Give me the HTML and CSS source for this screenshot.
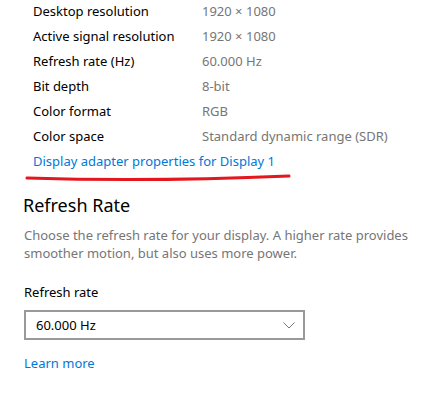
FILE: index.html
```html
<!DOCTYPE html>
<html>
<head>
<meta charset="utf-8">
<link rel="stylesheet" href="styles.css">
</head>
<body>
<div class="page">
  <div class="props">
    <div class="row"><span class="label">Desktop resolution</span><span class="value">1920 × 1080</span></div>
    <div class="row"><span class="label">Active signal resolution</span><span class="value">1920 × 1080</span></div>
    <div class="row"><span class="label">Refresh rate (Hz)</span><span class="value">60.000 Hz</span></div>
    <div class="row"><span class="label">Bit depth</span><span class="value">8-bit</span></div>
    <div class="row"><span class="label">Color format</span><span class="value">RGB</span></div>
    <div class="row"><span class="label">Color space</span><span class="value">Standard dynamic range (SDR)</span></div>
    <div class="row"><a class="link" href="#">Display adapter properties for Display 1</a></div>
  </div>
  <svg class="scribble" width="300" height="12" viewBox="0 0 300 12">
    <path d="M27 6 Q150 10 289 4" fill="none" stroke="#e3171d" stroke-width="3" stroke-linecap="round"/>
  </svg>
  <section class="section">
    <h2 class="heading">Refresh Rate</h2>
    <p class="desc">Choose the refresh rate for your display. A higher rate provides smoother motion, but also uses more power.</p>
    <div class="field-label">Refresh rate</div>
    <div class="select">
      <span class="select-text">60.000 Hz</span>
      <svg class="chevron" width="12" height="7" viewBox="0 0 12 7"><path d="M0.5 0.5 L6 6 L11.5 0.5" fill="none" stroke="#777" stroke-width="1"/></svg>
    </div>
    <a class="link learn" href="#">Learn more</a>
  </section>
</div>
</body>
</html>
```
FILE: styles.css
```css
html, body {
  margin: 0;
  padding: 0;
  background: #ffffff;
}
body {
  font-family: "Segoe UI", "Noto Sans", "Liberation Sans", sans-serif;
  font-size: 13px;
  color: #000;
}
.page {
  width: 434px;
  height: 403px;
  overflow: hidden;
}
.props {
  padding-left: 33px;
}
.row {
  display: flex;
  box-sizing: border-box;
  height: 25px;
  padding-bottom: 3px;
  align-items: center;
  line-height: 20px;
}
.label {
  width: 169px;
  color: #000;
}
.value {
  color: #767676;
}
.link {
  color: #0078d7;
  text-decoration: none;
}
.scribble {
  display: block;
  margin-top: -3px;
}
.section {
  padding-left: 24px;
  margin-top: 8px;
}
.heading {
  font-weight: 400;
  font-size: 18px;
  margin: 0 0 0 -1px;
  line-height: 26px;
}
.desc {
  margin: 8px 0 0 0;
  color: #767676;
  line-height: 18px;
  width: 400px;
}
.field-label {
  margin-top: 20px;
  line-height: 20px;
}
.select {
  margin-top: 8px;
  width: 267px;
  height: 26px;
  border: 2px solid #999;
  display: flex;
  align-items: center;
  justify-content: space-between;
  padding-left: 10px;
}
.select-text {
  color: #000;
}
.chevron {
  margin-right: 8px;
}
.learn {
  display: inline-block;
  margin-top: 13px;
  line-height: 20px;
}
```
